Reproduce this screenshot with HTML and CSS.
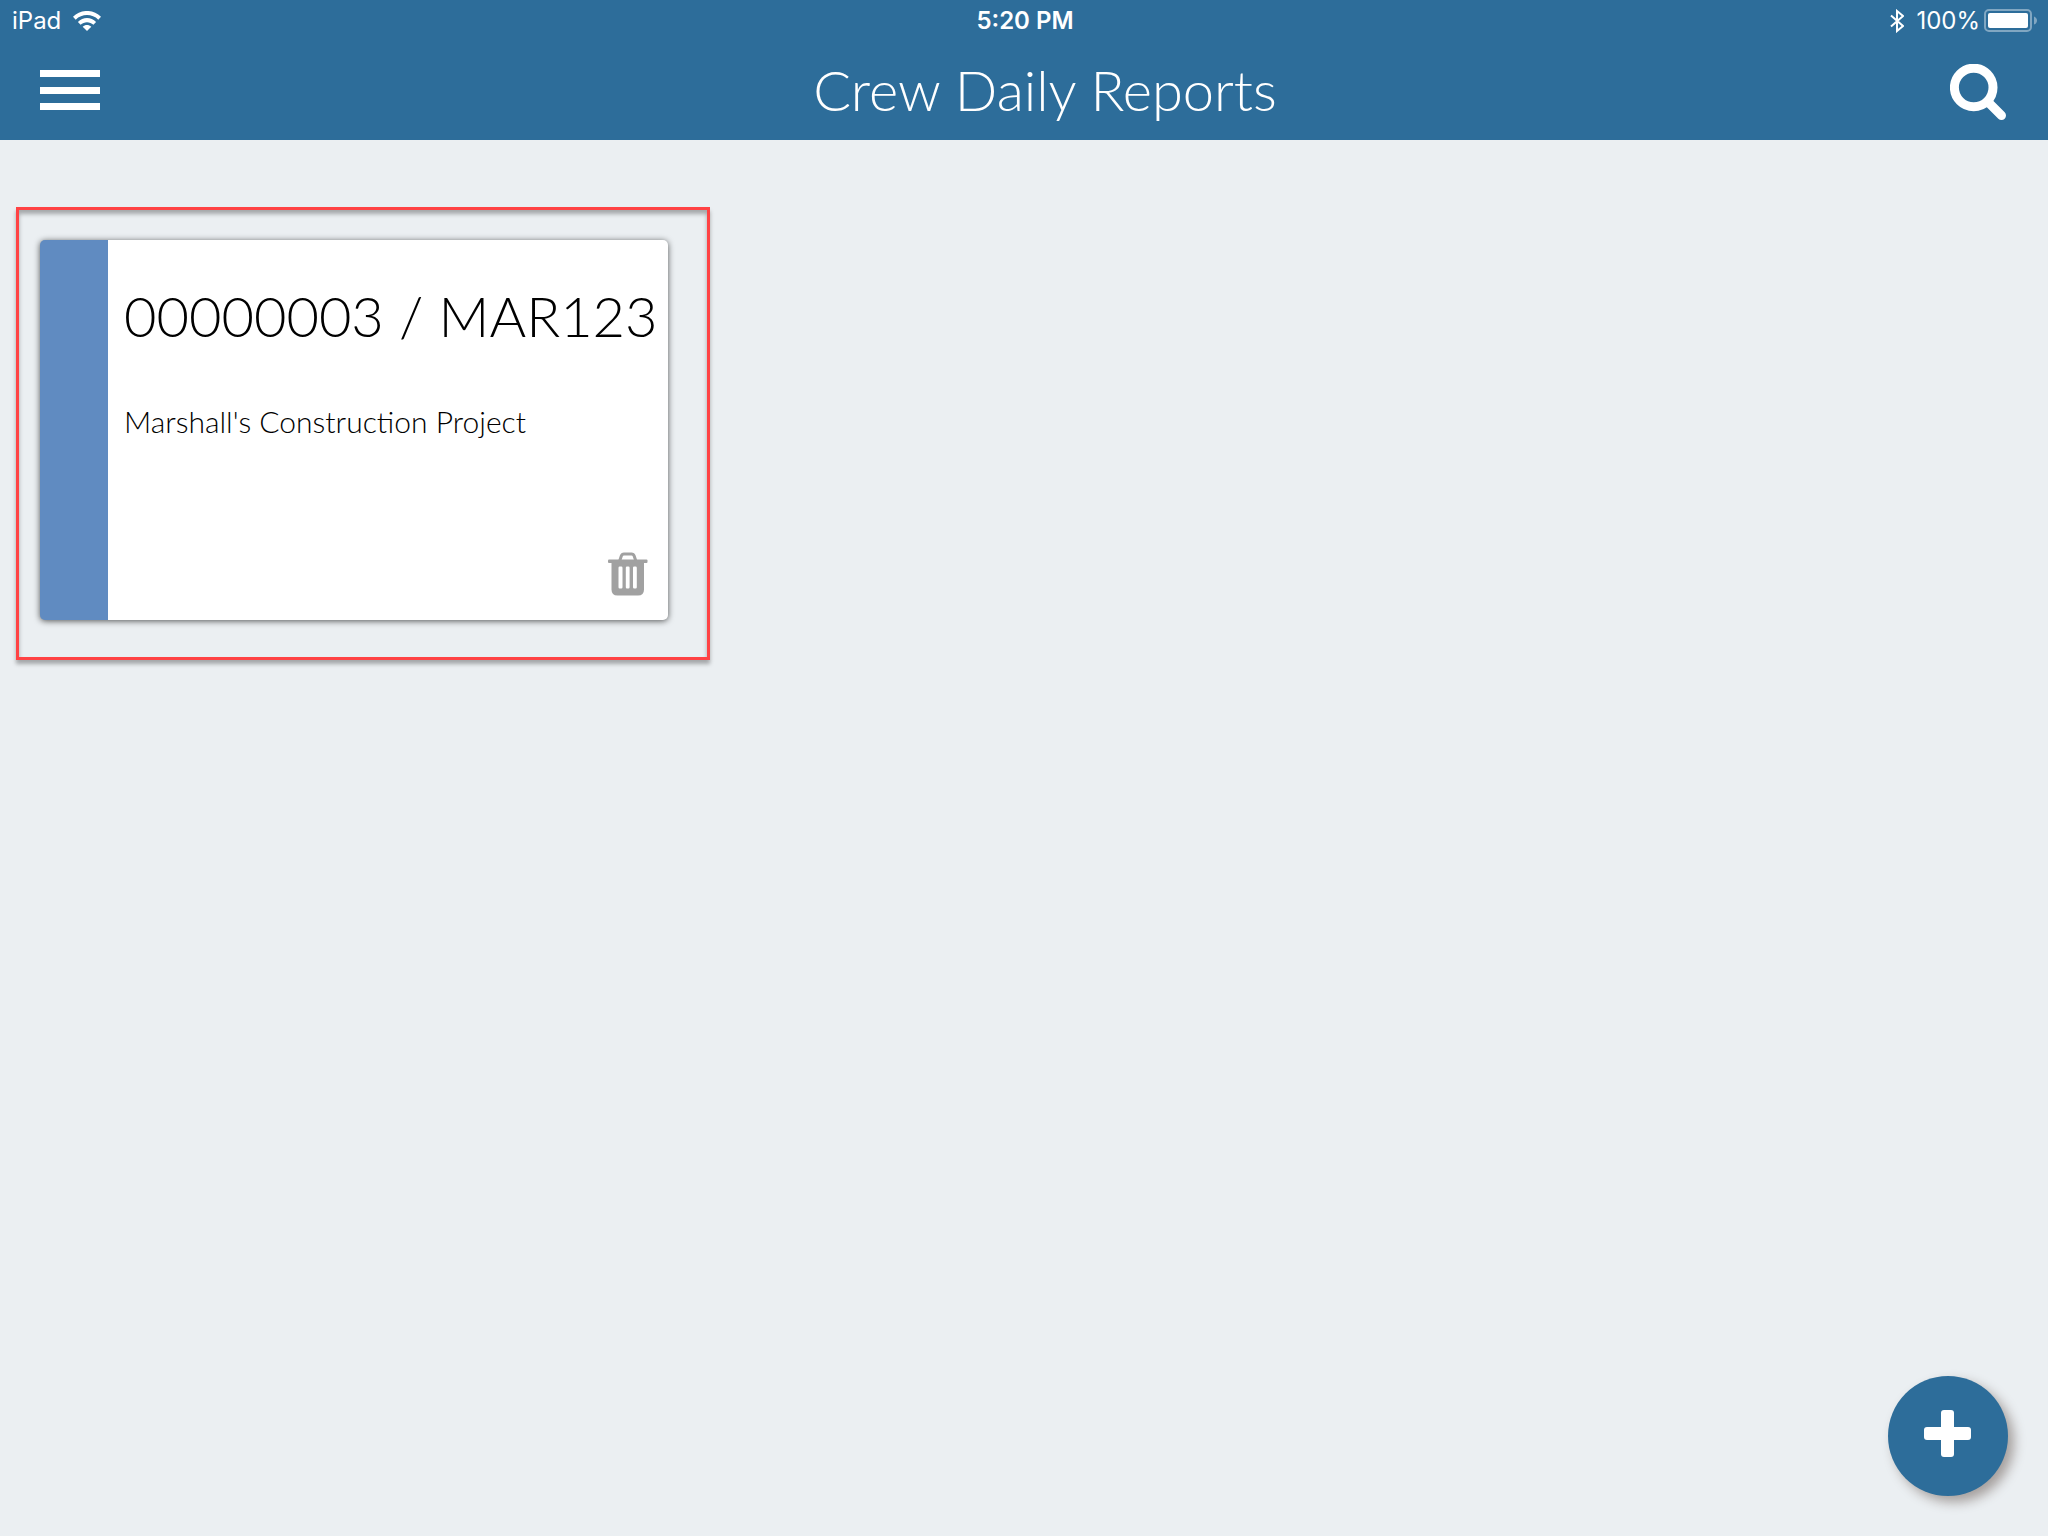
FILE: index.html
```html
<!DOCTYPE html>
<html lang="en">
<head>
<meta charset="utf-8">
<meta name="viewport" content="width=device-width, initial-scale=1">
<title>Crew Daily Reports</title>
<link rel="stylesheet" href="styles.css">
</head>
<body>
<header class="header">
  <div class="status">
    <div class="status-left">
      <span>iPad</span>
      <svg class="wifi" viewBox="0 0 28 20" aria-hidden="true">
        <path d="M0 5.8C7.4-2 20.600-2 28 5.800L25.300 8.700C19.200 2.500 8.800 2.500 2.700 8.700Z"/>
        <path d="M4.900 11C10 5.800 18 5.800 23.100 11L20.400 13.800C16.900 10.300 11.100 10.300 7.600 13.800Z"/>
        <path d="M9.700 15.800C12.100 13.400 15.900 13.400 18.300 15.800L14 20Z"/>
      </svg>
    </div>
    <time class="time" datetime="17:20">5:20 PM</time>
    <div class="status-right">
      <svg class="bluetooth" viewBox="0 0 14 24" aria-hidden="true">
        <path d="M1 6.500 13 17 7 22V2L13 7 1 17.500"/>
      </svg>
      <span>100%</span>
      <svg class="battery" viewBox="0 0 54 24" aria-hidden="true">
        <rect class="battery-case" x="1" y="1" width="46" height="21" rx="4"/>
        <rect x="4" y="4" width="40" height="15" rx="2"/>
        <path class="battery-tip" d="M50 7.500C52 8 53 10 53 11.500S52 15 50 15.500Z"/>
      </svg>
    </div>
  </div>
  <div class="toolbar">
    <button class="menu" type="button" aria-label="Menu">
      <span class="menu-line"></span>
      <span class="menu-line"></span>
      <span class="menu-line"></span>
    </button>
    <h1 class="title">Crew Daily Reports</h1>
    <button class="search" type="button" aria-label="Search">
      <svg viewBox="0 0 56 56" aria-hidden="true">
        <circle cx="23.700" cy="23.500" r="19.300"/>
        <path d="M38 38 51.500 51.500"/>
      </svg>
    </button>
  </div>
</header>
<main class="reports">
  <div class="selection">
    <article class="card">
      <div class="card-body">
        <h2 class="card-title">00000003 / MAR123</h2>
        <p class="card-project">Marshall's Construction Project</p>
        <button class="delete" type="button" aria-label="Delete report">
          <svg viewBox="0 0 40 44" aria-hidden="true">
            <path fill-rule="evenodd" d="M3.500 10.800H36V37.500Q36 43.500 30 43.500H9.500Q3.500 43.500 3.500 37.500ZM11.700 14.500Q10.500 14.500 10.500 15.700V35.300Q10.500 36.500 11.700 36.500H13.300Q14.500 36.500 14.500 35.300V15.700Q14.500 14.500 13.300 14.500ZM19 14.500Q17.800 14.500 17.800 15.700V35.300Q17.800 36.500 19 36.500H20.400Q21.600 36.500 21.600 35.300V15.700Q21.600 14.500 20.400 14.500ZM26.200 14.500Q25 14.500 25 15.700V35.300Q25 36.500 26.200 36.500H27.600Q28.800 36.500 28.800 35.300V15.700Q28.800 14.500 27.600 14.500Z"/>
            <rect x="0" y="7.500" width="39.500" height="3.500" rx="1"/>
            <path class="delete-handle" d="M11.800 8.500 13.300 4Q14 2 16 2H23.500Q25.500 2 26.200 4L27.700 8.500"/>
          </svg>
        </button>
      </div>
    </article>
  </div>
</main>
<button class="add" type="button" aria-label="Add report">
  <svg viewBox="0 0 48 48" aria-hidden="true">
    <rect x="17" y="0" width="13" height="47" rx="3"/>
    <rect x="0" y="17" width="47" height="13" rx="3"/>
  </svg>
</button>
</body>
</html>
```
FILE: styles.css
```css
* {
  box-sizing: border-box;
}

body {
  margin: 0;
  min-height: 100vh;
  background: #ebeff2;
  color: #000;
  font-family: Lato, "Open Sans", sans-serif;
  font-weight: 300;
}

button {
  padding: 0;
  border: 0;
  background: none;
  cursor: pointer;
}

svg {
  display: block;
}

.header {
  background: #2d6d9a;
  color: #fff;
}

.status {
  display: grid;
  grid-template-columns: 1fr auto 1fr;
  align-items: center;
  height: 40px;
  padding: 2px 10px 0 12px;
  font: 400 24px/38px Inter, Roboto, sans-serif;
}

.status svg {
  fill: #fff;
}

.status-left,
.status-right {
  display: flex;
  align-items: center;
}

.status-left {
  gap: 12px;
}

.status-right {
  justify-content: flex-end;
}

.time {
  font-weight: 600;
}

.wifi {
  width: 28px;
  height: 20px;
}

.status .bluetooth {
  width: 14px;
  height: 24px;
  margin-right: 12px;
  fill: none;
  stroke: #fff;
  stroke-width: 2;
}

.battery {
  width: 54px;
  height: 24px;
  margin-left: 4px;
}

.status .battery-case {
  fill: none;
  stroke: #81a7c2;
  stroke-width: 2;
}

.status .battery-tip {
  fill: #81a7c2;
}

.toolbar {
  display: flex;
  align-items: center;
  height: 100px;
}

.menu {
  display: flex;
  flex-direction: column;
  justify-content: space-between;
  width: 140px;
  height: 40px;
  padding: 0 40px;
}

.menu-line {
  height: 7px;
  background: #fff;
}

.title {
  flex: 1;
  margin: 0;
  font-size: 56px;
  font-weight: 300;
  line-height: 100px;
  text-align: center;
}

.search {
  width: 98px;
  padding: 4px 42px 0 0;
}

.search svg {
  width: 56px;
  height: 56px;
  fill: none;
  stroke: #fff;
  stroke-width: 9;
  stroke-linecap: round;
}

.reports {
  display: flex;
  flex-wrap: wrap;
  padding: 67px 16px;
}

.selection {
  padding: 30px 39px 37px 21px;
  border: 3px solid #ff4244;
  box-shadow: 0 4px 4px rgba(0, 0, 0, 0.3), inset 0 4px 4px rgba(0, 0, 0, 0.3);
}

.card {
  width: 628px;
  max-width: 100%;
  min-height: 380px;
  display: flex;
  border-left: 68px solid #608bc1;
  border-radius: 5px;
  background: #fff;
  box-shadow: 0 1px 6px rgba(0, 0, 0, 0.65);
}

.card-body {
  flex: 1;
  display: flex;
  flex-direction: column;
  padding: 42px 8px 24px 16px;
}

.card-title {
  margin: 0;
  font-size: 56px;
  font-weight: 300;
  line-height: 68px;
  white-space: nowrap;
}

.card-project {
  margin: 51px 0 0;
  font-size: 30px;
  line-height: 40px;
}

.delete {
  align-self: flex-end;
  margin: auto 12px 0 0;
}

.delete svg {
  width: 40px;
  height: 44px;
  fill: #a1a1a1;
}

.delete .delete-handle {
  fill: none;
  stroke: #a1a1a1;
  stroke-width: 3;
}

.add {
  position: fixed;
  right: 40px;
  bottom: 40px;
  display: grid;
  place-items: center;
  width: 120px;
  height: 120px;
  padding-bottom: 4px;
  border-radius: 50%;
  background: #2d6d9a;
  box-shadow: 6px 6px 12px rgba(60, 40, 30, 0.4);
}

.add svg {
  width: 48px;
  height: 48px;
  fill: #fff;
}
```
